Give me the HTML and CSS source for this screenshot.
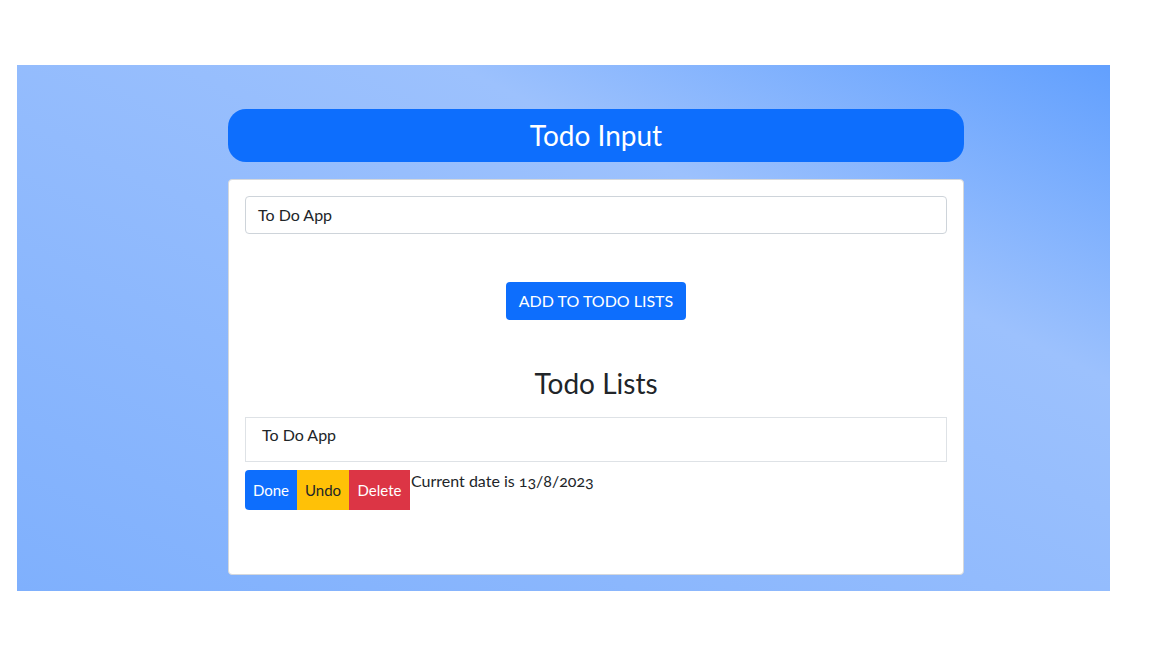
FILE: index.html
```html
<!DOCTYPE html>
<html>
<head>
<meta charset="utf-8">
<link rel="stylesheet" href="styles.css">
</head>
<body>
<div class="bg">
  <div class="app">
    <h1 class="title">Todo Input</h1>
    <div class="card">
      <div class="input">To Do App</div>
      <div class="add-row"><button class="btn btn-add">ADD TO TODO LISTS</button></div>
      <h2 class="lists-title">Todo Lists</h2>
      <div class="item">To Do App</div>
      <div class="actions">
        <button class="btn act done">Done</button><button class="btn act undo">Undo</button><button class="btn act del">Delete</button><span class="date">Current date is 13/8/2023</span>
      </div>
    </div>
  </div>
</div>
</body>
</html>
```
FILE: styles.css
```css
* { box-sizing: border-box; }
html, body { margin: 0; padding: 0; background: #fff; }
body { font-family: "Lato", "Open Sans", sans-serif; color: #212529; }
.bg {
  margin: 65px 42px 0 17px;
  height: 526px;
  background: linear-gradient(to bottom left, #62a0fe 0%, #9cc1fd 30%, #92bbfd 55%, #7fb0fd 100%);
  padding: 44px 0 0 211px;
}
.app { width: 736px; }
.title {
  margin: 0;
  height: 53px;
  background: #0d6efd;
  border-radius: 18px;
  color: #fff;
  font-weight: 400;
  font-size: 28px;
  line-height: 53px;
  text-align: center;
}
.card {
  margin-top: 17px;
  height: 396px;
  background: #fff;
  border: 1px solid #d5d8dc;
  border-radius: 4px;
  padding: 16px;
}
.input {
  height: 38px;
  border: 1px solid #ced4da;
  border-radius: 4px;
  padding: 0 12px;
  line-height: 35px;
  font-size: 16px;
  color: #212529;
}
.add-row { display: flex; justify-content: center; margin-top: 48px; }
.btn { font-family: inherit; border: 0; cursor: pointer; }
.btn-add {
  height: 38px;
  width: 180px;
  background: #0d6efd;
  color: #fff;
  border-radius: 4px;
  font-size: 16px;
  padding-bottom: 2px;
}
.lists-title {
  margin: 46px 0 17px;
  font-weight: 400;
  font-size: 28px;
  line-height: 34px;
  text-align: center;
}
.item {
  height: 45px;
  border: 1px solid #dee2e6;
  padding: 7px 16px;
  font-size: 16px;
  line-height: 20px;
}
.actions { display: flex; align-items: flex-start; margin-top: 8px; }
.act { height: 40px; font-size: 15px; padding: 0; }
.done { width: 52px; background: #0d6efd; color: #fff; border-radius: 4px 0 0 4px; }
.undo { width: 52px; background: #ffc107; color: #212529; }
.del { width: 61px; background: #dc3545; color: #fff; }
.date { font-size: 16px; line-height: 22px; margin-left: 1px; font-variant-numeric: oldstyle-nums; }
```
